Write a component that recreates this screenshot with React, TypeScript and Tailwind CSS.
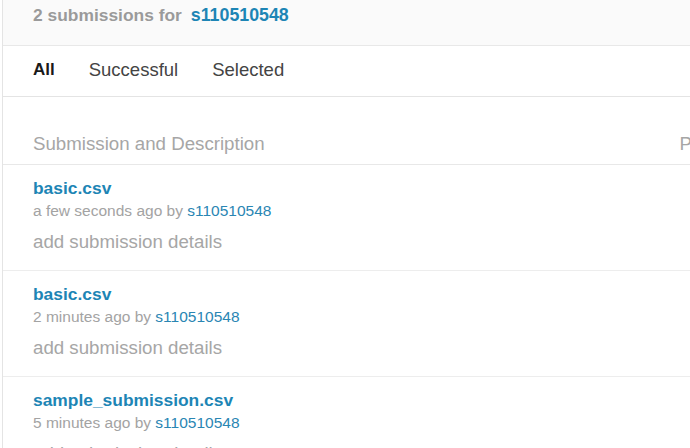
const submissions = [
  { file: "basic.csv", when: "a few seconds ago" },
  { file: "basic.csv", when: "2 minutes ago" },
  { file: "sample_submission.csv", when: "5 minutes ago" },
];

const user = "s110510548";

export default function App() {
  return (
    <div
      className="h-[448px] w-[690px] overflow-hidden bg-white"
      style={{ fontFamily: '"Liberation Sans", Arial, sans-serif' }}
    >
      <div className="ml-[2px] h-full border-l border-[#e4e4e4]">
        <div className="flex h-[46px] items-start border-b border-[#e8e8e8] bg-[#fafafa] pl-[30px] pt-[5px]">
          <span className="text-[17.4px] font-bold leading-[20px] text-[#9a9a9a]">
            2 submissions for
          </span>
          <span className="ml-[9px] text-[17.8px] font-bold leading-[20px] text-[#1d85b5]">
            {user}
          </span>
        </div>

        <div className="flex h-[51px] items-center gap-[34px] border-b border-[#e4e4e4] pl-[30px] pb-[2px] text-[18.5px]">
          <span className="text-[17px] font-bold text-[#1a1a1a]">All</span>
          <span className="text-[#444]">Successful</span>
          <span className="text-[#444]">Selected</span>
        </div>

        <div className="flex h-[68px] items-end justify-between overflow-hidden border-b border-[#e8e8e8] pb-[6px] pl-[30px] text-[18.7px] text-[#a6a6a6]">
          <span>Submission and Description</span>
          <span className="mr-[-2px]">P</span>
        </div>

        {submissions.map((s, i) => (
          <div
            key={i}
            className="h-[106px] border-b border-[#ededed] pl-[30px] pt-[13px]"
          >
            <div className="text-[17.4px] font-bold leading-[20px] text-[#1d85b5]">
              {s.file}
            </div>
            <div className="mt-[3px] text-[15.5px] leading-[20px] text-[#a3a3a3]">
              {s.when} by <span className="text-[#2a86b3]">{user}</span>
            </div>
            <div className="mt-[11px] text-[18.7px] leading-[20px] text-[#a6a6a6]">
              add submission details
            </div>
          </div>
        ))}
      </div>
    </div>
  );
}
